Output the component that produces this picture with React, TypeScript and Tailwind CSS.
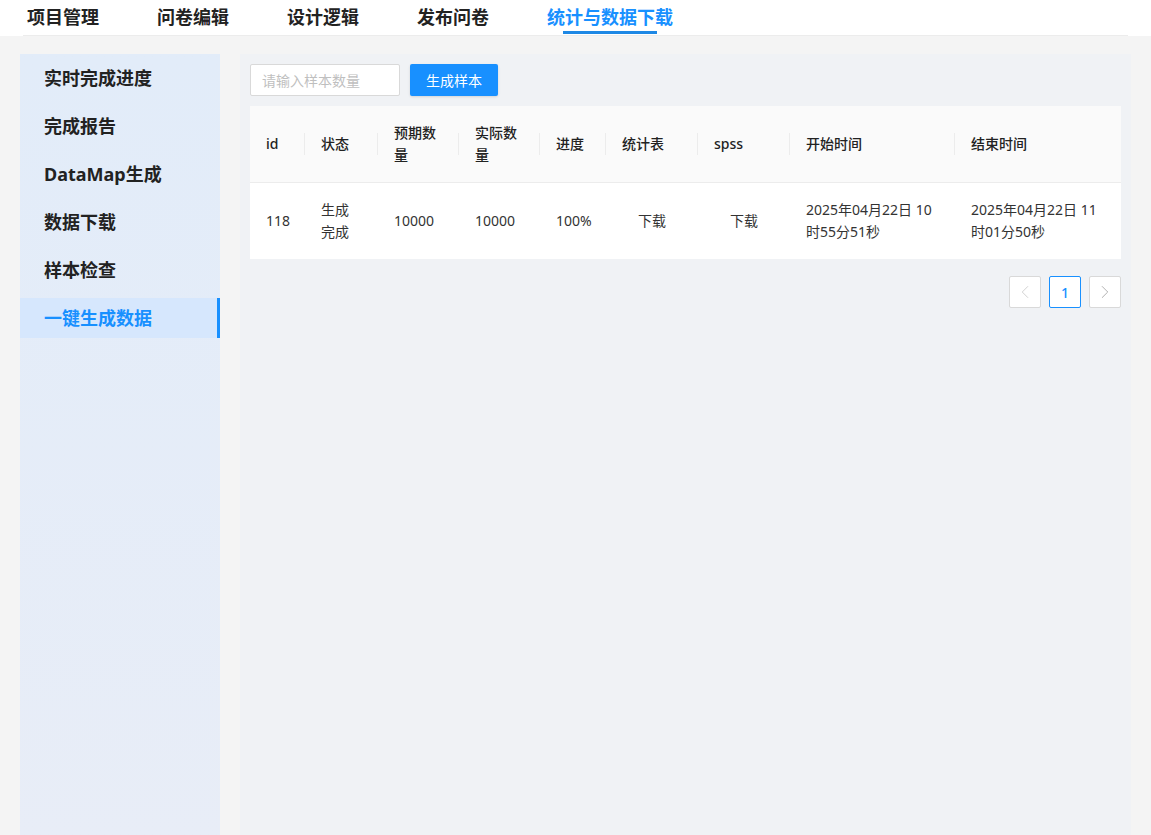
import React from 'react';
import { ChevronLeft, ChevronRight } from 'lucide-react';

const tabs = ['项目管理', '问卷编辑', '设计逻辑', '发布问卷', '统计与数据下载'];
const menu = ['实时完成进度', '完成报告', 'DataMap生成', '数据下载', '样本检查', '一键生成数据'];

const cols = [
  { title: 'id', w: 55 },
  { title: '状态', w: 73 },
  { title: '预期数量', w: 81 },
  { title: '实际数量', w: 81 },
  { title: '进度', w: 66 },
  { title: '统计表', w: 92 },
  { title: 'spss', w: 92 },
  { title: '开始时间', w: 165 },
  { title: '结束时间', w: 166 },
];

const font = { fontFamily: '"Noto Sans", "Noto Sans CJK SC", sans-serif' };

export default function App() {
  const active = 4;
  const activeMenu = 5;

  return (
    <div className="w-[1151px] h-[835px] flex flex-col bg-[#f4f4f4] overflow-hidden" style={font}>
      {/* top nav */}
      <div className="bg-white shrink-0">
        <div className="ml-[23px] w-[1105px] h-[36px] border-b border-[#ececec] flex pl-[4px] gap-[58px]">
          {tabs.map((t, i) => (
            <div
              key={t}
              className={
                'relative h-full flex items-start pt-[4px] text-[18px] leading-[26px] font-bold ' +
                (i === active ? 'text-[#1890ff]' : 'text-[#222]')
              }
            >
              {t}
              {i === active && (
                <div className="absolute left-1/2 -translate-x-1/2 bottom-[1px] w-[94px] h-[3px] bg-[#1e88e5]" />
              )}
            </div>
          ))}
        </div>
      </div>

      <div className="flex-1 flex gap-[20px] pl-[20px] pt-[18px]">
        {/* sidebar */}
        <div className="w-[200px] h-full bg-gradient-to-b from-[#e2ecf9] to-[#e8edf7] pt-[4px] flex flex-col gap-[8px]">
          {menu.map((m, i) => (
            <div
              key={m}
              className={
                'h-[40px] flex items-center pl-[24px] text-[18px] font-bold ' +
                (i === activeMenu
                  ? 'bg-[#d6e7fd] text-[#1890ff] border-r-[3px] border-[#1890ff]'
                  : 'text-[#222]')
              }
            >
              {m}
            </div>
          ))}
        </div>

        {/* main */}
        <div className="w-[891px] h-full bg-[#f0f2f5] p-[10px]">
          <div className="flex gap-[10px]">
            <input
              placeholder="请输入样本数量"
              className="w-[150px] h-[32px] bg-white border border-[#d9d9d9] rounded-[2px] px-[11px] text-[14px] text-[#333] placeholder:text-[#bfbfbf] outline-none"
            />
            <button className="w-[88px] h-[32px] bg-[#1890ff] text-white text-[14px] rounded-[2px] shadow-sm">
              生成样本
            </button>
          </div>

          <table className="mt-[10px] w-[871px] table-fixed border-collapse text-[14px] leading-[22px]">
            <colgroup>
              {cols.map((c) => (
                <col key={c.title} style={{ width: c.w }} />
              ))}
            </colgroup>
            <thead>
              <tr className="bg-[#fafafa]">
                {cols.map((c, i) => (
                  <th
                    key={c.title}
                    className={
                      'relative text-left font-medium text-[#222] px-[16px] py-[16px] border-b border-[#ececec] ' +
                      (i < cols.length - 1
                        ? 'before:content-[""] before:absolute before:right-0 before:top-1/2 before:-translate-y-1/2 before:h-[22px] before:w-px before:bg-[#ececec]'
                        : '')
                    }
                  >
                    {c.title}
                  </th>
                ))}
              </tr>
            </thead>
            <tbody>
              <tr className="bg-white text-[#333]">
                <td className="px-[16px] py-[16px]">118</td>
                <td className="px-[16px] py-[16px]">生成完成</td>
                <td className="px-[16px] py-[16px]">10000</td>
                <td className="px-[16px] py-[16px]">10000</td>
                <td className="px-[16px] py-[16px]">100%</td>
                <td className="px-[16px] py-[16px] text-center">下载</td>
                <td className="px-[16px] py-[16px] text-center">下载</td>
                <td className="px-[16px] py-[16px]">2025年04月22日 10时55分51秒</td>
                <td className="px-[16px] py-[16px]">2025年04月22日 11时01分50秒</td>
              </tr>
            </tbody>
          </table>

          <div className="mt-[17px] w-[871px] flex justify-end gap-[8px]">
            <div className="w-[32px] h-[32px] bg-white border border-[#d9d9d9] rounded-[2px] flex items-center justify-center text-[#c8c8c8]">
              <ChevronLeft size={22} strokeWidth={0.9} />
            </div>
            <div className="w-[32px] h-[32px] bg-white border border-[#1890ff] rounded-[2px] flex items-center justify-center text-[14px] font-medium text-[#1890ff]">
              1
            </div>
            <div className="w-[32px] h-[32px] bg-white border border-[#d9d9d9] rounded-[2px] flex items-center justify-center text-[#a0a0a0]">
              <ChevronRight size={22} strokeWidth={0.9} />
            </div>
          </div>
        </div>
      </div>
    </div>
  );
}
